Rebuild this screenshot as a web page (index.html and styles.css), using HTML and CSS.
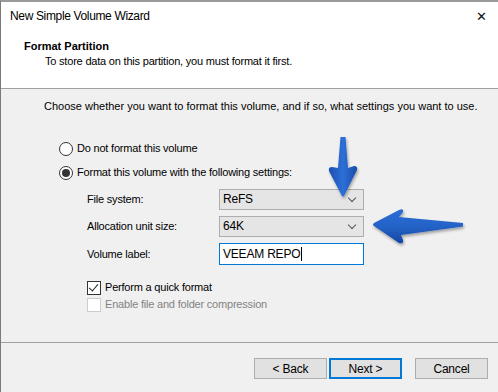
FILE: index.html
```html
<!DOCTYPE html>
<html lang="en">
<head>
  <meta charset="UTF-8">
  <title>New Simple Volume Wizard</title>
  <link rel="stylesheet" href="styles.css">
</head>
<body>
  <div class="window">
    <div class="titlebar">
      <span class="title">New Simple Volume Wizard</span>
      <span class="close">&#x2715;</span>
    </div>

    <div class="header">
      <div class="heading">Format Partition</div>
      <div class="subheading">To store data on this partition, you must format it first.</div>
    </div>

    <div class="content">
      <p class="intro">Choose whether you want to format this volume, and if so, what settings you want to use.</p>

      <div class="option">
        <span class="radio"></span>
        <span>Do not format this volume</span>
      </div>
      <div class="option">
        <span class="radio checked"></span>
        <span>Format this volume with the following settings:</span>
      </div>

      <div class="settings">
        <label>File system:</label>
        <div class="combo"><span>ReFS</span><span class="chevron"></span></div>

        <label>Allocation unit size:</label>
        <div class="combo"><span>64K</span><span class="chevron"></span></div>

        <label>Volume label:</label>
        <div class="textbox">VEEAM REPO<span class="caret"></span></div>
      </div>

      <div class="check-row first">
        <span class="checkbox checked"></span>
        <span>Perform a quick format</span>
      </div>
      <div class="check-row disabled">
        <span class="checkbox"></span>
        <span>Enable file and folder compression</span>
      </div>
    </div>

    <div class="footer">
      <button>&lt; Back</button>
      <button class="default">Next &gt;</button>
      <button class="cancel">Cancel</button>
    </div>

    <!-- annotation arrows drawn over the dialog -->
    <svg class="arrows" width="498" height="392" viewBox="0 0 498 392">
      <defs>
        <linearGradient id="blueV" x1="0" y1="0" x2="1" y2="0">
          <stop offset="0" stop-color="#1b4fae"/>
          <stop offset="0.5" stop-color="#2d6fd8"/>
          <stop offset="1" stop-color="#1a4ca6"/>
        </linearGradient>
        <linearGradient id="blueH" x1="0" y1="0" x2="0" y2="1">
          <stop offset="0" stop-color="#2a6bd4"/>
          <stop offset="0.5" stop-color="#2463c8"/>
          <stop offset="1" stop-color="#1647a0"/>
        </linearGradient>
        <filter id="shadow" x="-30%" y="-30%" width="160%" height="160%">
          <feGaussianBlur in="SourceAlpha" stdDeviation="1.5"/>
          <feOffset dx="1" dy="2"/>
          <feComponentTransfer><feFuncA type="linear" slope="0.35"/></feComponentTransfer>
          <feMerge><feMergeNode/><feMergeNode in="SourceGraphic"/></feMerge>
        </filter>
      </defs>
      <path filter="url(#shadow)" fill="url(#blueV)"
            d="M340.5 137 L345.5 137 L348 168 L354 166 Q358 166 357 170 L344 196 Q343 197 342 196 L329 171 Q328 167 332 167 L338 168 Z"/>
      <path filter="url(#shadow)" fill="url(#blueH)"
            d="M463 223 L463 226.5 L401 235 L403 240 Q404 244 399 243 L374 226 Q372 225 374 223 L399 210 Q404 208 403 212 L399 217 Z"/>
    </svg>
  </div>
</body>
</html>
```

FILE: styles.css
```css
html, body {
  margin: 0;
  padding: 0;
}
body {
  font-family: 'Liberation Sans', Arial, sans-serif;
  font-size: 11px;
  letter-spacing: -0.2px;
  line-height: 15px;
  color: #000;
  background: #f0f0f0;
}
.window {
  position: relative;
  width: 497px;
  height: 390px;
  border-top: 2px solid #9a9a9a;
  border-left: 1px solid #7a7a7a;
  background: #f0f0f0;
  overflow: hidden;
}
.titlebar {
  height: 29px;
  background: #fff;
  display: flex;
  align-items: center;
  justify-content: space-between;
  padding: 0 11px 0 9px;
}
.title {
  font-size: 12px;
  letter-spacing: -0.35px;
  color: #000;
  padding-bottom: 1px;
}
.close {
  font-size: 13px;
  color: #111;
}
.header {
  height: 57px;
  background: #fff;
  border-bottom: 1px solid #a0a0a0;
  padding-left: 23px;
}
.heading {
  font-weight: bold;
  letter-spacing: 0;
  padding-top: 8px;
}
.subheading {
  padding-left: 21px;
  color: #000;
}
.content {
  padding: 10px 0 0 43px;
  height: 243px;
}
.intro {
  margin: 0 0 27px;
  letter-spacing: 0;
}
.option {
  display: flex;
  align-items: center;
  gap: 4px;
  margin-left: 15px;
  height: 15px;
  margin-bottom: 9px;
}
.radio {
  width: 12px;
  height: 12px;
  border: 1px solid #333;
  border-radius: 50%;
  background: #fff;
  display: flex;
  align-items: center;
  justify-content: center;
}
.radio.checked::after {
  content: "";
  width: 8px;
  height: 8px;
  border-radius: 50%;
  background: #333;
}
.settings {
  display: grid;
  grid-template-columns: 132px 145px;
  row-gap: 6px;
  margin-left: 43px;
  align-items: center;
}
.combo {
  height: 19px;
  border: 1px solid #adadad;
  background: #e5e5e5;
  display: flex;
  align-items: center;
  justify-content: space-between;
  padding: 0 8px 0 3px;
  font-size: 12px;
}
.chevron {
  width: 5px;
  height: 5px;
  border-right: 1px solid #555;
  border-bottom: 1px solid #555;
  transform: rotate(45deg);
  margin-bottom: 3px;
}
.textbox {
  height: 20px;
  border: 1px solid #0078d7;
  background: #fff;
  display: flex;
  align-items: center;
  padding-left: 3px;
  font-size: 12px;
}
.caret {
  width: 1px;
  height: 14px;
  background: #000;
  margin-left: 1px;
}
.check-row {
  display: flex;
  align-items: center;
  gap: 4px;
  margin-left: 43px;
  height: 15px;
}
.check-row.first {
  margin-top: 15px;
  margin-bottom: 2px;
}
.checkbox {
  width: 12px;
  height: 12px;
  border: 1px solid #333;
  background: #fff;
  position: relative;
}
.checkbox.checked::after {
  content: "";
  position: absolute;
  left: 3px;
  top: 0px;
  width: 4px;
  height: 8px;
  border-right: 1px solid #222;
  border-bottom: 1px solid #222;
  transform: rotate(40deg);
}
.check-row.disabled {
  color: #838383;
}
.check-row.disabled .checkbox {
  border-color: #ccc;
}
.footer {
  border-top: 1px solid #a0a0a0;
  padding: 15px 0 0 253px;
  display: flex;
}
button {
  font-family: inherit;
  font-size: 12px;
  letter-spacing: -0.2px;
  width: 73px;
  height: 21px;
  background: #e1e1e1;
  border: 1px solid #adadad;
  padding: 0;
  color: #000;
  margin-right: 2px;
}
button.default {
  border: 2px solid #0078d7;
}
button.cancel {
  margin-left: 11px;
}
.arrows {
  position: absolute;
  left: -1px;
  top: -2px;
  pointer-events: none;
}
```
